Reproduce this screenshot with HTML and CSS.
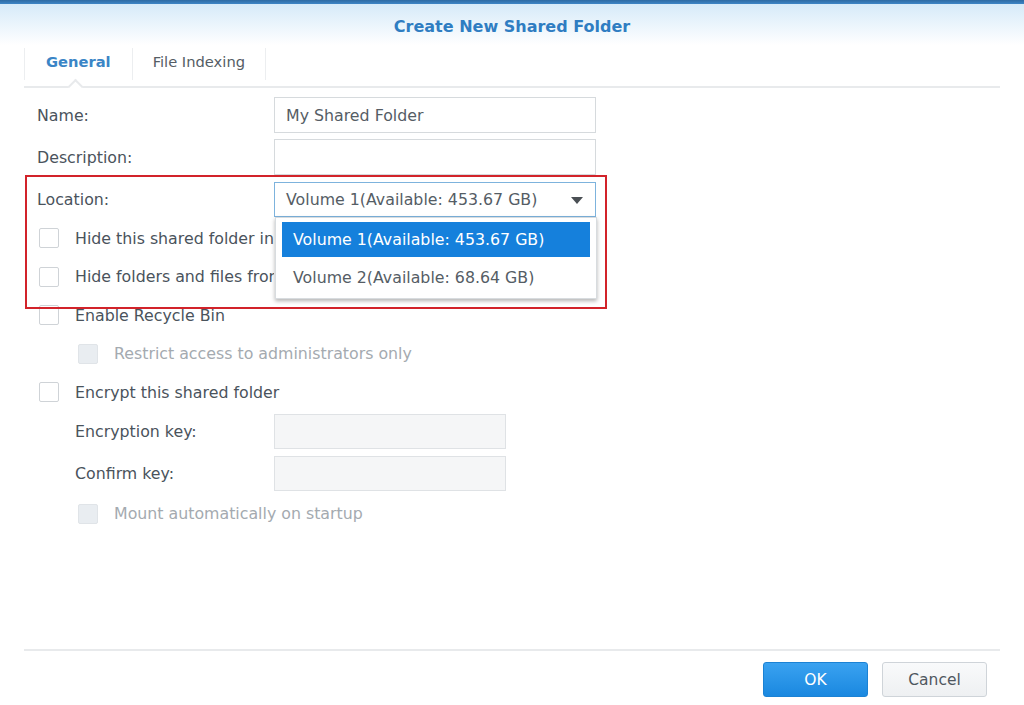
FILE: index.html
```html
<!DOCTYPE html>
<html>
<head>
<meta charset="utf-8">
<link rel="stylesheet" href="styles.css">
</head>
<body>
<div class="topbar"></div>
<div class="header"><span class="title">Create New Shared Folder</span></div>
<div class="tabs">
  <div class="tab active">General<span class="notch"></span></div>
  <div class="tab">File Indexing</div>
</div>
<div class="main">
  <div class="row">
    <label class="lbl">Name:</label>
    <div class="field">My Shared Folder</div>
  </div>
  <div class="row">
    <label class="lbl">Description:</label>
    <div class="field"></div>
  </div>
  <div class="row">
    <label class="lbl">Location:</label>
    <div class="field select">Volume 1(Available: 453.67 GB)<span class="arrow"></span></div>
  </div>
  <div class="checks">
    <div class="check"><span class="box"></span><span class="clip">Hide this shared folder in "My Network Places"</span></div>
    <div class="check"><span class="box"></span><span class="clip">Hide folders and files from users without permissions</span></div>
    <div class="check"><span class="box"></span>Enable Recycle Bin</div>
    <div class="check sub disabled"><span class="box"></span>Restrict access to administrators only</div>
    <div class="check"><span class="box"></span>Encrypt this shared folder</div>
  </div>
  <div class="enc">
    <div class="row sub">
      <label class="lbl">Encryption key:</label>
      <div class="field short disabled"></div>
    </div>
    <div class="row sub">
      <label class="lbl">Confirm key:</label>
      <div class="field short disabled"></div>
    </div>
    <div class="check sub disabled"><span class="box"></span>Mount automatically on startup</div>
  </div>

  <div class="dropdown">
    <div class="opt selected">Volume 1(Available: 453.67 GB)</div>
    <div class="opt">Volume 2(Available: 68.64 GB)</div>
  </div>
  <div class="highlight"></div>
</div>
<div class="footer">
  <button class="btn primary">OK</button>
  <button class="btn">Cancel</button>
</div>
</body>
</html>
```
FILE: styles.css
```css
html, body {
  margin: 0;
  padding: 0;
}
body {
  width: 1024px;
  height: 705px;
  overflow: hidden;
  background: #fff;
  font-family: "DejaVu Sans", Verdana, sans-serif;
  font-size: 15.8px;
  color: #4a535c;
  display: flex;
  flex-direction: column;
}
.topbar {
  height: 4px;
  background: linear-gradient(#2d6aa3, #3d85c6);
  flex: none;
}
.header {
  height: 41px;
  flex: none;
  background: linear-gradient(#d6eaf9, #ffffff);
  display: flex;
  align-items: center;
  justify-content: center;
  padding-top: 4px;
  box-sizing: border-box;
}
.title {
  font-weight: bold;
  font-size: 16px;
  color: #2f7dc2;
}
.tabs {
  flex: none;
  margin: 0 24px;
  height: 43px;
  border-bottom: 2px solid #e8eaec;
  box-sizing: border-box;
  display: flex;
  align-items: stretch;
  padding-top: 3px;
  padding-bottom: 6px;
}
.tab {
  position: relative;
  display: flex;
  align-items: center;
  font-size: 14.7px;
  color: #555d65;
  padding: 0 20px 6px 20px;
  border-right: 1px solid #eceef0;
}
.tab.active {
  font-weight: bold;
  color: #3a85c6;
  border-left: 1px solid #eceef0;
  padding: 0 21px 6px 21px;
}
.notch {
  position: absolute;
  left: 45px;
  bottom: -12px;
  width: 9px;
  height: 9px;
  background: #fff;
  border-left: 2px solid #e8eaec;
  border-top: 2px solid #e8eaec;
  transform: rotate(45deg);
}
.main {
  flex: 1;
  position: relative;
  padding: 9px 0 0 37px;
}
.row {
  display: flex;
  align-items: center;
  height: 36px;
  margin-bottom: 6px;
}
.lbl {
  width: 237px;
  flex: none;
  padding-top: 1px;
}
.row.sub .lbl {
  width: 199px;
  padding-left: 38px;
}
.field {
  width: 322px;
  height: 36px;
  box-sizing: border-box;
  border: 1px solid #d6dadd;
  padding-left: 11px;
  padding-top: 1px;
  display: flex;
  align-items: center;
  color: #555d65;
  position: relative;
  background: #fff;
}
.field.select {
  border-color: #7db3dd;
  height: 35px;
}
.arrow {
  position: absolute;
  right: 12px;
  top: 14px;
  width: 0;
  height: 0;
  border-left: 6px solid transparent;
  border-right: 6px solid transparent;
  border-top: 7px solid #4a4f54;
}
.field.short {
  width: 232px;
  height: 35px;
}
.field.disabled {
  background: #f5f6f7;
  border-color: #dfe2e5;
}
.checks {
  margin-top: -4px;
}
.check {
  display: flex;
  align-items: center;
  height: 38.5px;
  white-space: nowrap;
}
.clip {
  display: block;
  width: 199px;
  overflow: hidden;
}
.box {
  width: 20px;
  height: 20px;
  box-sizing: border-box;
  border: 1px solid #cfd3d7;
  border-radius: 2px;
  margin-left: 2px;
  margin-right: 16px;
  flex: none;
  background: #fff;
}
.check.sub {
  padding-left: 39px;
}
.check.disabled {
  color: #a4aab0;
}
.check.disabled .box {
  background: #e9edf1;
  border-color: #e0e4e8;
}
.enc {
  padding-top: 2px;
}
.enc .row {
  height: 35px;
  margin-bottom: 7px;
}
.enc .check {
  margin-top: -3px;
}
.dropdown {
  position: absolute;
  left: 275px;
  top: 129px;
  width: 322px;
  height: 82px;
  box-sizing: border-box;
  background: #fff;
  border: 1px solid #d8dcdf;
  box-shadow: 0 2px 4px rgba(0,0,0,0.3);
  padding: 4px 6px 0 6px;
}
.opt {
  height: 36px;
  display: flex;
  align-items: center;
  padding-left: 11px;
  color: #555d65;
  margin-bottom: 2px;
}
.opt.selected {
  background: #1580dc;
  color: #fff;
  height: 35px;
}
.highlight {
  position: absolute;
  left: 25px;
  top: 87px;
  width: 582px;
  height: 134px;
  box-sizing: border-box;
  border: 2px solid #d2232a;
  pointer-events: none;
}
.footer {
  flex: none;
  margin: 0 24px;
  border-top: 2px solid #e8eaec;
  padding: 11px 13px 8px 0;
  display: flex;
  justify-content: flex-end;
  gap: 14px;
}
.btn {
  width: 105px;
  height: 35px;
  font-family: "DejaVu Sans", Verdana, sans-serif;
  font-size: 15.5px;
  border-radius: 3px;
  border: 1px solid #cfd4d9;
  background: linear-gradient(#f9fafb, #eef0f2);
  color: #4f575f;
  padding: 0;
}
.btn.primary {
  background: linear-gradient(#3aa2f0, #1a88e0);
  border-color: #1b82d4;
  color: #fff;
}
```
